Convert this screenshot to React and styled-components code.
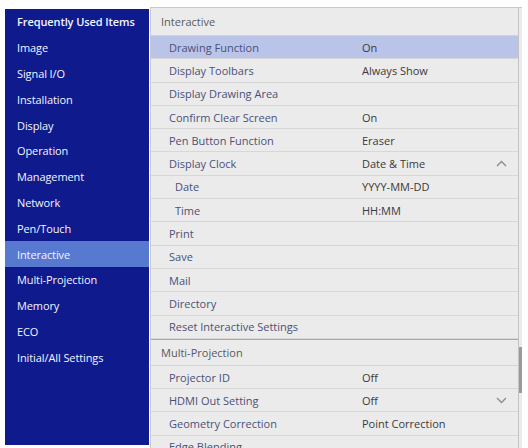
import React from 'react';
import styled, { createGlobalStyle } from 'styled-components';

const GlobalStyle = createGlobalStyle`
  body {
    margin: 0;
    background: #ffffff;
    font-family: 'Open Sans', 'Noto Sans', sans-serif;
    overflow: hidden;
  }
`;

const Screen = styled.div`
  display: flex;
  align-items: flex-start;
  gap: 1px;
  height: 448px;
  padding: 7px 6px 0 5px;
  box-sizing: border-box;
  overflow: hidden;
`;

const Sidebar = styled.nav`
  width: 144px;
  height: 436px;
  margin-top: 2px;
  background: #0f1b8d;
  flex-shrink: 0;
`;

const NavItem = styled.div`
  height: 25.8px;
  display: flex;
  align-items: center;
  padding-left: 12px;
  font-size: 11px;
  color: #f2f4ff;
  font-weight: ${(p) => (p.$bold ? 600 : 400)};
  background: ${(p) => (p.$active ? '#5779d0' : 'transparent')};
  letter-spacing: -0.1px;
`;

const Panel = styled.div`
  flex: 1;
  display: flex;
  height: 460px;
  background: #ebebeb;
  border: 1px solid #c9c9c9;
  border-right: none;
`;

const List = styled.div`
  flex: 1;
`;

const Section = styled.div`
  height: ${(p) => (p.$first ? 28 : 27)}px;
  display: flex;
  align-items: center;
  padding-left: 10px;
  font-size: 11px;
  color: #5a5a5a;
  border-top: ${(p) => (p.$first ? 'none' : '1px solid #a9a9a9')};
  border-bottom: 1px solid #d4d4d4;
  box-sizing: border-box;
`;

const Row = styled.div`
  height: 23.3px;
  display: grid;
  grid-template-columns: 211px 1fr 22px;
  align-items: center;
  font-size: 11px;
  background: ${(p) => (p.$selected ? '#bac4e8' : '#ebebeb')};
  border-bottom: 1px solid #d7d7d7;
  box-sizing: border-box;
`;

const Label = styled.div`
  padding-left: ${(p) => (p.$indent ? 24 : 18)}px;
  color: #4a5178;
  white-space: nowrap;
`;

const Value = styled.div`
  color: #3a3a3a;
  white-space: nowrap;
`;

const Chevron = styled.svg`
  width: 11px;
  height: 7px;
  stroke: #8a8a8a;
  fill: none;
  stroke-width: 1.3;
`;

const Scrollbar = styled.div`
  width: 3px;
  border-left: 1px solid #c4c4c4;
  display: flex;
  flex-direction: column;
`;

const Thumb = styled.div`
  margin-top: 339px;
  height: 46px;
  background: #9a9a9a;
`;

const navItems = [
  'Frequently Used Items',
  'Image',
  'Signal I/O',
  'Installation',
  'Display',
  'Operation',
  'Management',
  'Network',
  'Pen/Touch',
  'Interactive',
  'Multi-Projection',
  'Memory',
  'ECO',
  'Initial/All Settings',
];

const interactiveRows = [
  { label: 'Drawing Function', value: 'On', selected: true },
  { label: 'Display Toolbars', value: 'Always Show' },
  { label: 'Display Drawing Area' },
  { label: 'Confirm Clear Screen', value: 'On' },
  { label: 'Pen Button Function', value: 'Eraser' },
  { label: 'Display Clock', value: 'Date & Time', chevron: 'up' },
  { label: 'Date', value: 'YYYY-MM-DD', indent: true },
  { label: 'Time', value: 'HH:MM', indent: true },
  { label: 'Print' },
  { label: 'Save' },
  { label: 'Mail' },
  { label: 'Directory' },
  { label: 'Reset Interactive Settings' },
];

const multiRows = [
  { label: 'Projector ID', value: 'Off' },
  { label: 'HDMI Out Setting', value: 'Off', chevron: 'down' },
  { label: 'Geometry Correction', value: 'Point Correction' },
  { label: 'Edge Blending' },
];

function SettingRow({ row }) {
  return (
    <Row $selected={row.selected}>
      <Label $indent={row.indent}>{row.label}</Label>
      <Value>{row.value}</Value>
      {row.chevron && (
        <Chevron viewBox="0 0 11 7">
          {row.chevron === 'up' ? (
            <polyline points="1,6 5.5,1.5 10,6" />
          ) : (
            <polyline points="1,1 5.5,5.5 10,1" />
          )}
        </Chevron>
      )}
    </Row>
  );
}

export default function App() {
  return (
    <>
      <GlobalStyle />
      <Screen>
        <Sidebar>
          {navItems.map((item, i) => (
            <NavItem key={item} $bold={i === 0} $active={item === 'Interactive'}>
              {item}
            </NavItem>
          ))}
        </Sidebar>
        <Panel>
          <List>
            <Section $first>Interactive</Section>
            {interactiveRows.map((row) => (
              <SettingRow key={row.label} row={row} />
            ))}
            <Section>Multi-Projection</Section>
            {multiRows.map((row) => (
              <SettingRow key={row.label} row={row} />
            ))}
          </List>
          <Scrollbar>
            <Thumb />
          </Scrollbar>
        </Panel>
      </Screen>
    </>
  );
}
